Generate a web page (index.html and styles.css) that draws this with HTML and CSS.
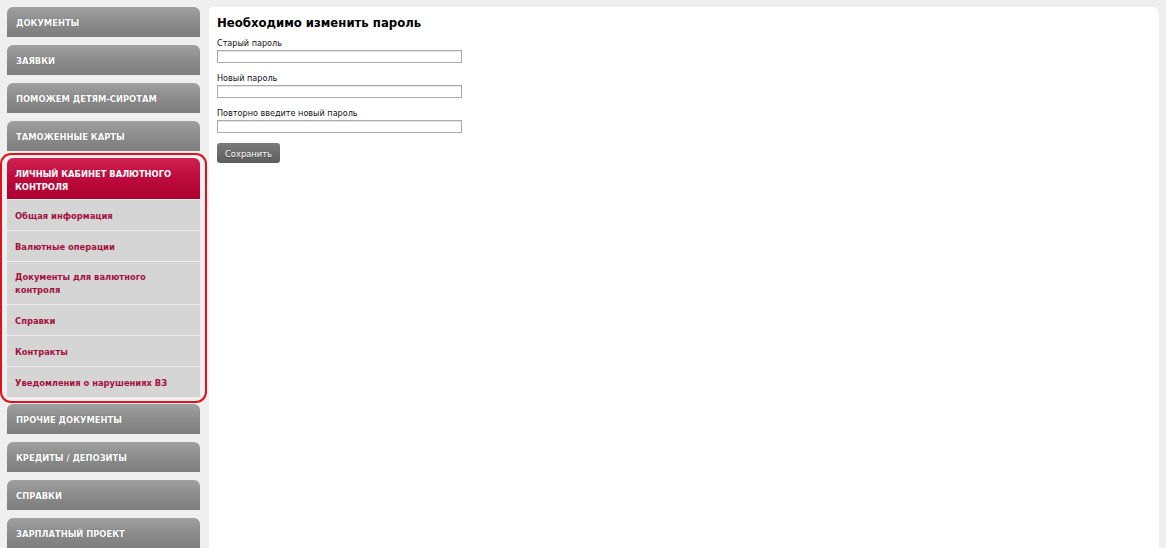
FILE: index.html
```html
<!DOCTYPE html>
<html lang="ru">
<head>
<meta charset="utf-8">
<title>Необходимо изменить пароль</title>
<link rel="stylesheet" href="styles.css">
</head>
<body>
<div class="page">
  <nav class="sidebar">
    <a class="nav-item">Документы</a>
    <a class="nav-item">Заявки</a>
    <a class="nav-item">Поможем детям-сиротам</a>
    <a class="nav-item">Таможенные карты</a>
    <div class="nav-group">
      <a class="nav-head">Личный кабинет валютного контроля</a>
      <a class="nav-sub">Общая информация</a>
      <a class="nav-sub">Валютные операции</a>
      <a class="nav-sub nav-sub-tall">Документы для валютного<br>контроля</a>
      <a class="nav-sub">Справки</a>
      <a class="nav-sub">Контракты</a>
      <a class="nav-sub">Уведомления о нарушениях ВЗ</a>
    </div>
    <a class="nav-item">Прочие документы</a>
    <a class="nav-item">Кредиты / депозиты</a>
    <a class="nav-item">Справки</a>
    <a class="nav-item">Зарплатный проект</a>
  </nav>
  <main class="panel">
    <h1 class="title">Необходимо изменить пароль</h1>
    <form class="form">
      <label class="field">
        <span class="label">Старый пароль</span>
        <input class="input" type="password">
      </label>
      <label class="field">
        <span class="label">Новый пароль</span>
        <input class="input" type="password">
      </label>
      <label class="field">
        <span class="label">Повторно введите новый пароль</span>
        <input class="input" type="password">
      </label>
      <button class="btn" type="button">Сохранить</button>
    </form>
  </main>
</div>
</body>
</html>
```
FILE: styles.css
```css
html, body {
  margin: 0;
  padding: 0;
  background: #efefef;
  font-family: "DejaVu Sans Condensed", "DejaVu Sans", sans-serif;
  font-size: 9px;
  color: #000;
  overflow: hidden;
}

.page {
  display: flex;
  align-items: stretch;
  gap: 9px;
  padding: 7px 7px 0 7px;
  min-height: 600px;
}

.sidebar {
  width: 193px;
  flex: none;
  display: flex;
  flex-direction: column;
  gap: 8px;
}

.nav-item {
  display: flex;
  align-items: center;
  height: 30px;
  padding: 0 9px;
  border-radius: 6px 6px 0 0;
  background: linear-gradient(to bottom, #a0a0a0 0%, #8c8c8c 50%, #7d7d7d 100%);
  color: #fff;
  font-weight: bold;
  font-size: 9.3px;
  text-transform: uppercase;
  text-shadow: 0 0 1px rgba(0,0,0,0.3);
  box-sizing: border-box;
}

.nav-group {
  position: relative;
  display: flex;
  flex-direction: column;
  margin-top: -1px;
  margin-bottom: -1px;
}

.nav-group::after {
  content: "";
  position: absolute;
  top: -5px;
  left: -7px;
  right: -7px;
  bottom: -6px;
  border: 2px solid #e0121e;
  border-radius: 11px;
  pointer-events: none;
}

.nav-head {
  display: flex;
  align-items: center;
  height: 41px;
  padding: 2px 8px 0;
  border-radius: 6px 6px 0 0;
  background: linear-gradient(to bottom, #cf2150 0%, #bd0a3c 50%, #aa0030 100%);
  color: #fff;
  font-weight: bold;
  font-size: 9.3px;
  line-height: 13px;
  text-transform: uppercase;
  box-sizing: border-box;
}

.nav-sub {
  display: flex;
  align-items: center;
  height: 31px;
  padding: 0 8px;
  border-top: 1px solid #ececec;
  background: #d5d5d5;
  color: #a4103e;
  font-weight: bold;
  font-size: 9.3px;
  line-height: 13px;
  box-sizing: border-box;
}

.nav-sub-tall {
  height: 43px;
}

.panel {
  flex: 1;
  background: #fff;
  border-radius: 4px 7px 0 0;
  padding: 7px 8px;
}

.title {
  margin: 0 0 5px 0;
  font-size: 13px;
  font-weight: bold;
  line-height: 18px;
  color: #000;
}

.form {
  display: flex;
  flex-direction: column;
  align-items: flex-start;
}

.field {
  display: flex;
  flex-direction: column;
  margin-bottom: 9px;
}

.label {
  line-height: 13px;
  color: #111;
}

.input {
  width: 245px;
  height: 13px;
  margin: 0;
  padding: 0;
  border: 1px solid #a9a9a9;
  box-sizing: border-box;
  box-shadow: inset 0 1px 1px #e4e4e4;
  background: #fff;
}

.btn {
  margin-top: 1px;
  width: 63px;
  height: 20px;
  padding: 0;
  border: none;
  border-radius: 3px;
  background: linear-gradient(to bottom, #7a7a7a 0%, #5d5d5d 100%);
  color: #fff;
  font-family: inherit;
  font-size: 9.3px;
  text-shadow: 0 1px 0 rgba(0,0,0,0.4);
}
```
